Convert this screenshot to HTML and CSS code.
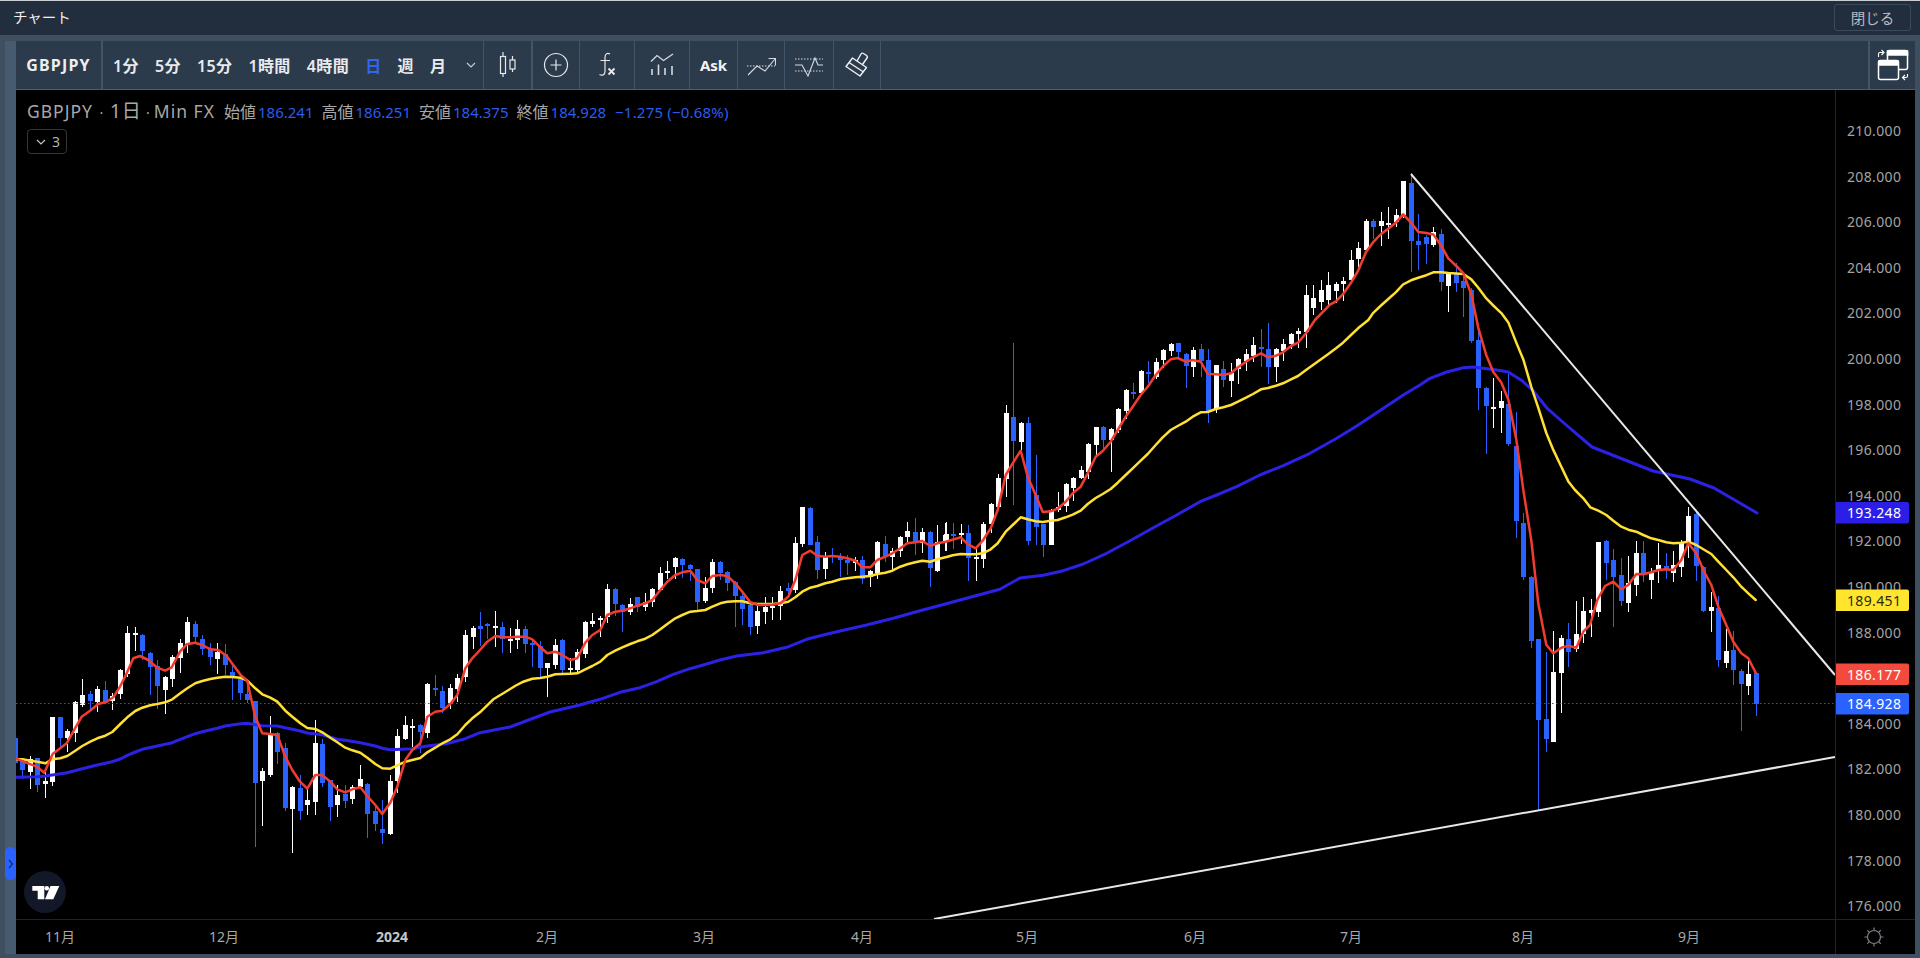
FILE: index.html
```html
<!DOCTYPE html>
<html lang="ja">
<head>
<meta charset="utf-8">
<title>チャート</title>
<link rel="stylesheet" href="styles.css">
</head>
<body>
<div class="window">
  <header class="titlebar">
    <span class="title">チャート</span>
    <button class="close">閉じる</button>
  </header>
  <div class="frame">
    <div class="side"></div>
    <div class="main">
      <div class="toolbar">
        <div class="tb symbol">GBPJPY</div>
        <div class="tb intervals">
          <span>1分</span><span>5分</span><span>15分</span><span>1時間</span><span>4時間</span><span class="active">日</span><span>週</span><span>月</span>
          <svg class="chev" viewBox="0 0 10 6" width="10" height="6"><path d="M1 1l4 4 4-4" fill="none" stroke="#c8ced6" stroke-width="1.1"/></svg>
        </div>
        <div class="tb w49 thick">
          <svg viewBox="0 0 28 28" width="28" height="28" fill="none" stroke="#e6e8ea" stroke-width="1.2"><path d="M9 1v25M18.500 5v16" /><rect x="6.500" y="5.500" width="5" height="17" fill="#2c3b4c"/><rect x="16" y="9" width="5" height="9" fill="#2c3b4c"/></svg>
        </div>
        <div class="tb w47">
          <svg viewBox="0 0 28 28" width="28" height="28" fill="none" stroke="#e6e8ea" stroke-width="1.2"><circle cx="14" cy="14" r="11.500"/><path d="M14 8.500v11M8.500 14h11"/></svg>
        </div>
        <div class="tb w55">
          <svg viewBox="0 0 28 28" width="28" height="28" fill="none" stroke="#e6e8ea" stroke-width="1.2"><path d="M17 3c-3-1.500-5 0-5 3.500v14c0 3.500-3 4.500-5.500 3M7.500 9.500H17"/><path d="M15.500 17.500l6 6m0-6l-6 6" stroke-width="1.800"/></svg>
        </div>
        <div class="tb w55">
          <svg viewBox="0 0 28 28" width="28" height="28" fill="none" stroke="#d6dade" stroke-width="1.300"><path d="M3 10.500l6-6 6.500 5L25 3"/><path d="M4 18v6M10.500 13.500V24M17 17v7M24 15v9" stroke-width="1.600"/></svg>
        </div>
        <div class="tb w48 ask">Ask</div>
        <div class="tb w47">
          <svg viewBox="0 0 30 28" width="30" height="28" fill="none" stroke="#d6dade" stroke-width="1.100"><path d="M2 24l9-9 8 5L29 8"/><path d="M22.500 7.500h7v7"/><path d="M1 15h28" stroke-dasharray="1.500 1.500"/></svg>
        </div>
        <div class="tb w49">
          <svg viewBox="0 0 30 28" width="30" height="28" fill="none" stroke="#d6dade" stroke-width="1.100"><path d="M1 14h7l6 11 7-18 3 7h5"/><path d="M1 8h28M1 20h28" stroke-dasharray="1.500 1.500"/></svg>
        </div>
        <div class="tb w47">
          <svg viewBox="0 0 28 28" width="28" height="28" fill="none" stroke="#f0f1f2" stroke-width="1.400" stroke-linejoin="round"><path d="M3 15.500L9.500 7l14 9.500-6.500 8.500z"/><path d="M14 10l4-7c.5-1 1.500-1.200 2.500-.5l3 2c1 .7 1.200 1.500.5 2.500l-4.500 6.500"/><path d="M6 11.500l14.500 9.500"/></svg>
        </div>
        <div class="spacer"></div>
        <div class="tb layout">
          <svg viewBox="0 0 34 34" width="34" height="34" fill="none" stroke="#fff" stroke-width="1.500"><rect x="11.500" y="2.500" width="20" height="19" rx="2"/><path d="M11.500 3h20v4h-20z" fill="#fff"/><rect x="2.500" y="12.500" width="20" height="19" rx="2" fill="#2c3b4c"/><path d="M3 13h19v4H3z" fill="#fff"/><path d="M2.500 9V6c0-1 .5-1.500 1.500-1.500h3M5.500 2l2.500 2.500L5.500 7M31.500 26v2c0 1-.5 1.500-1.500 1.500h-3.500M29 27l-2.500 2.500L29 32" stroke-width="1.100"/></svg>
        </div>
      </div>
      <div class="pane">
        <div class="legend">
          <div class="legend-row">
            <span class="sym">GBPJPY</span><span class="dot wide">·</span><span class="iv">1日</span><span class="dot narrow">·</span><span class="sym src">Min FX</span>
            <span class="ohlc">始値<b>186.241</b></span><span class="ohlc">高値<b>186.251</b></span><span class="ohlc">安値<b>184.375</b></span><span class="ohlc">終値<b>184.928</b></span><span class="chg">−1.275 (−0.68%)</span>
          </div>
          <button class="collapse"><svg viewBox="0 0 10 6" width="10" height="6"><path d="M1 1l4 4 4-4" fill="none" stroke="#c4c4c4" stroke-width="1.200"/></svg>3</button>
        </div>
        <svg class="chart" id="chart" viewBox="16 90 1899 864" width="1899" height="864">
          <g id="plot"></g>
          <path class="axis-line" d="M16 919.500H1915M1835.500 90V954"/>
          <g class="price">
            <text x="1847" y="136">210.000</text><text x="1847" y="181.600">208.000</text><text x="1847" y="227.200">206.000</text><text x="1847" y="272.800">204.000</text><text x="1847" y="318.400">202.000</text><text x="1847" y="364">200.000</text><text x="1847" y="409.600">198.000</text><text x="1847" y="455.200">196.000</text><text x="1847" y="500.800">194.000</text><text x="1847" y="546.400">192.000</text><text x="1847" y="592">190.000</text><text x="1847" y="637.600">188.000</text><text x="1847" y="728.800">184.000</text><text x="1847" y="774.400">182.000</text><text x="1847" y="820">180.000</text><text x="1847" y="865.600">178.000</text><text x="1847" y="911.200">176.000</text>
          </g>
          <g class="tags">
            <path class="t-blue" d="M1836 502h71a2 2 0 0 1 2 2v17.500a2 2 0 0 1-2 2h-71z"/><text x="1847" y="518">193.248</text>
            <path class="t-yellow" d="M1836 589.500h71a2 2 0 0 1 2 2v17.500a2 2 0 0 1-2 2h-71z"/><text class="dark" x="1847" y="605.500">189.451</text>
            <path class="t-red" d="M1836 663.500h71a2 2 0 0 1 2 2v17.500a2 2 0 0 1-2 2h-71z"/><text x="1847" y="679.500">186.177</text>
            <path class="t-main" d="M1836 693h71a2 2 0 0 1 2 2v17.500a2 2 0 0 1-2 2h-71z"/><text x="1847" y="709">184.928</text>
          </g>
          <g class="time">
            <text x="60" y="942">11月</text><text x="224" y="942">12月</text><text class="year" x="392" y="942">2024</text><text x="547" y="942">2月</text><text x="704" y="942">3月</text><text x="862" y="942">4月</text><text x="1027" y="942">5月</text><text x="1195" y="942">6月</text><text x="1351" y="942">7月</text><text x="1523" y="942">8月</text><text x="1689" y="942">9月</text>
          </g>
          <g class="sun" fill="none" stroke="#7d8187" stroke-width="1.200"><circle cx="1874" cy="937" r="6.500"/><path d="M1874 927.500v2.500M1874 944v2.500M1864.500 937h2.500M1881 937h2.500M1867.300 930.300l1.800 1.800M1879 942l1.800 1.800M1867.300 943.700l1.800-1.800M1879 932l1.800-1.800"/></g>
          <g class="logo">
            <circle class="logo-bg" cx="45" cy="892" r="21"/>
            <path class="logo-mark" d="M32.300 886h12v13.300h-6.600v-8.600h-5.400z"/>
            <circle class="logo-mark" cx="46.800" cy="888.300" r="2.300"/>
            <path class="logo-mark" d="M50.500 886h8.800l-6 13.300H45z"/>
          </g>
        </svg>
        <button class="tab" aria-label="open"><svg viewBox="0 0 6 10" width="6" height="10"><path d="M1 1l3.500 4L1 9" fill="none" stroke="#0b2a78" stroke-width="1.200"/></svg></button>
      </div>
    </div>
  </div>
</div>
<script src="chart.js"></script>
</body>
</html>
```

FILE: styles.css
```css
* { box-sizing: border-box; }
html, body { margin: 0; height: 100%; background: #3f4f60; overflow: hidden; }
body { font-family: "Noto Sans", "Noto Sans CJK JP", sans-serif; }
button { font-family: inherit; }

.window { display: flex; flex-direction: column; width: 1920px; height: 958px; }

.titlebar { display: flex; align-items: center; justify-content: space-between; height: 35px; padding: 0 9px 1px 13px; background: #222e3d; border-top: 1px solid #c9ced4; flex: none; }
.title { padding-bottom: 3px; color: #f0f0f0; font-size: 14.500px; }
.close { width: 77px; height: 27px; padding: 0; background: transparent; border: 1px solid #3b4a5b; border-radius: 3px; color: #b8bcc1; font-size: 14.500px; }

.frame { display: flex; flex: 1; min-height: 0; padding: 6px 5px 4px 5px; background: #3f4f60; }
.side { width: 11px; flex: none; background: #465a70; }
.main { display: flex; flex-direction: column; flex: 1; min-width: 0; }

.toolbar { display: flex; height: 49px; flex: none; background: #2c3b4c; border-bottom: 1px solid #4a5d72; color: #e8eaec; }
.tb { display: flex; align-items: center; justify-content: center; height: 48px; flex: none; border-right: 1px solid #41556b; }
.symbol { width: 87px; border-right-width: 2px; font-size: 16px; font-weight: 700; letter-spacing: 1.200px; color: #eceef0; }
.intervals { width: 381px; justify-content: flex-start; gap: 16px; padding-left: 10px; font-size: 16px; font-weight: 600; letter-spacing: .4px; }
.intervals .active { color: #2f66f0; }
.chev { margin-left: 4px; }
.thick { border-right-width: 2px; }
.w47 { width: 47px; }
.w48 { width: 48px; }
.w49 { width: 49px; }
.w55 { width: 55px; }
.ask { font-size: 15px; font-weight: 700; color: #f2f3f4; }
.spacer { flex: 1; }
.layout { width: 47px; border-right: 0; border-left: 2px solid #41556b; }

.pane { position: relative; flex: 1; min-height: 0; background: #000; }
.chart { display: block; }

.legend { position: absolute; left: 11px; top: 6px; display: flex; flex-direction: column; align-items: flex-start; gap: 9px; }
.legend-row { display: flex; align-items: baseline; height: 24px; color: #a8a8a8; font-size: 16px; white-space: nowrap; }
.sym { font-size: 17.500px; letter-spacing: 1px; }
.iv { font-size: 19px; letter-spacing: 1px; }
.dot { text-align: center; font-size: 14px; }
.dot.wide { width: 17px; }
.dot.narrow { width: 12px; }
.ohlc { margin-left: 8px; }
.ohlc b { margin-left: 2px; font-size: 15px; font-weight: 400; color: #2a5cf0; }
.chg { margin-left: 9px; font-size: 15px; color: #2a5cf0; letter-spacing: .2px; }
.src + .ohlc { margin-left: 9px; }

.collapse { display: flex; align-items: center; gap: 6px; width: 40px; height: 25px; padding: 0 0 0 8px; background: #000; border: 1px solid #33363a; border-radius: 4px; color: #b4b4b4; font-size: 14px; }

.tab { position: absolute; left: -11px; top: 757px; display: flex; align-items: center; justify-content: center; width: 11px; height: 33px; padding: 0; border: 0; border-radius: 5px; background: #2962ff; }

.axis-line { fill: none; stroke: #222326; stroke-width: 1; }
.price text, .time text, .tags text { font-family: "Noto Sans", "Noto Sans CJK JP", sans-serif; font-size: 14px; }
.price text { fill: #a3a3a3; letter-spacing: .35px; }
.time text { fill: #a8a8a8; text-anchor: middle; }
.time .year { fill: #c6c6c6; font-weight: 700; }
.tags text { fill: #fff; letter-spacing: .35px; }
.tags .dark { fill: #2a2a10; }
.t-blue { fill: #2b1ee6; }
.t-yellow { fill: #ffe52e; }
.t-red { fill: #f44a3e; }
.t-main { fill: #2962ff; }
.logo-bg { fill: #131829; }
.logo-mark { fill: #fff; }

.c-up { fill: #fff; }
.c-dn { fill: #2962ff; }
.ma { fill: none; stroke-width: 2.500; stroke-linejoin: round; stroke-linecap: round; }
.ma-red { stroke: #f23c30; }
.ma-yellow { stroke: #ffe033; }
.ma-blue { stroke: #2b22e6; stroke-width: 3; }
.trend { fill: none; stroke: #e8e8e8; stroke-width: 2; }
.last { fill: none; stroke: #2a55d8; stroke-width: 1; stroke-dasharray: 1.500 2.500; }
```

FILE: chart.js
```js
// Chart data read off the reference: each segment has its own [xoff, yoff, yscale] and
// candles are [x, up, high, top, bottom, low].
var NS = 'http://www.w3.org/2000/svg';
var plot = document.getElementById('plot');

var candleSegs = [
 [0,580,3,[[45,0,474,474,548,548],[67,0,535,543,570,596],[91,1,528,537,575,627],[112,0,534,534,614,636],[136,1,575,602,612,654],[157,1,410,410,605,618],[181,0,411,411,473,505],[202,1,448,452,473,516],[226,1,362,365,458,486],[247,1,296,345,375,380],[271,0,332,342,362,388],[292,1,318,327,365,396],[316,0,303,330,365,372],[337,1,340,348,362,390],[361,1,268,269,341,356],[382,1,137,158,282,290],[406,1,140,158,163,212],[427,0,162,165,214,240],[451,0,216,219,260,345],[472,0,240,258,319,388],[496,1,288,290,329,401],[517,1,224,231,296,320],[541,1,176,188,235,278],[562,1,112,125,192,220],[586,0,122,132,172,188],[607,0,165,178,207,225],[631,0,188,208,232,255],[652,1,188,216,238,282],[676,0,192,222,256,285],[697,0,258,277,295,360],[721,0,282,298,338,360],[742,0,298,342,359,370],[766,0,363,363,608,800],[787,1,563,573,602,738],[811,1,407,461,585,590],[832,0,457,459,515,552],[856,0,489,504,683,692],[877,1,618,621,686,818],[901,0,586,624,692,720],[922,1,625,660,674,705],[946,1,420,489,665,705],[967,0,478,492,608,620],[991,0,600,601,680,722],[1012,1,615,645,674,711],[1036,0,616,641,662,684],[1057,1,615,622,656,672],[1081,1,555,597,621,628],[1102,0,610,612,701,773],[1126,0,672,694,731,752],[1147,0,660,748,758,792],[1171,1,585,603,762,765],[1192,1,447,468,602,638],[1216,1,407,435,476,480],[1237,1,417,437,440,500],[1261,0,432,435,456,518],[1282,1,308,312,458,473],[1306,0,285,324,328,347],[1327,0,318,333,385,400],[1351,1,312,324,372,386],[1372,1,282,293,326,365],[1396,1,150,165,292,305]]],
 [470,440,3,[[9,1,558,563,592,627],[31,0,516,558,568,618],[52,0,548,551,559,596],[76,1,512,557,563,622],[97,0,546,561,596,640],[121,1,563,596,600,638],[142,1,539,566,601,626],[166,0,558,567,613,640],[187,0,600,608,612,680],[211,0,602,617,683,716],[232,1,668,669,685,770],[256,1,596,615,674,688],[277,0,597,599,689,705],[301,1,655,685,690,700],[322,1,626,636,690,700],[346,1,543,545,641,655],[367,1,518,543,551,562],[391,1,528,533,538,590],[412,1,433,447,532,550],[436,0,445,447,493,527],[457,0,492,495,515,575],[481,1,473,491,515,524],[502,0,470,470,502,517],[526,1,458,485,501,512],[547,1,444,446,487,500],[571,1,382,398,450,452],[592,1,362,392,400,417],[616,1,350,355,382,418],[637,0,354,356,376,415],[661,0,372,374,386,424],[682,0,386,387,487,510],[706,1,412,443,482,490],[727,1,358,367,445,458],[751,0,363,365,398,420],[772,0,393,396,428,452],[796,0,422,425,467,562],[817,0,462,467,506,555],[841,0,482,496,560,585],[862,1,490,512,557,581],[886,1,472,500,517,552],[907,1,472,497,503,540],[931,1,438,452,497,540],[955,0,430,445,452,462],[976,1,292,308,449,460],[997,1,200,202,312,320],[1021,0,202,205,314,316],[1042,0,288,306,390,416],[1066,1,335,348,386,418],[1087,0,325,345,350,370],[1111,0,340,348,361,410],[1132,0,345,360,370,405],[1156,1,352,360,368,392],[1177,0,348,360,416,432],[1201,1,390,392,412,440],[1222,1,304,305,400,418],[1246,0,288,311,352,365],[1267,1,325,333,352,395],[1291,1,288,291,333,350],[1312,1,245,272,292,310],[1336,0,234,275,305,345],[1357,1,264,276,310,340],[1381,0,273,275,385,442],[1402,1,254,306,394,395],[1426,1,248,284,303,332]]],
 [940,320,3,[[17,1,607,643,662,692],[38,0,608,642,647,688],[62,1,611,640,645,672],[83,0,615,638,714,782],[107,1,678,711,717,782],[128,1,605,611,718,745],[152,1,548,551,611,638],[173,1,463,473,562,530],[197,1,256,278,477,530],[218,0,70,292,363,556],[242,1,305,308,365,390],[263,0,292,310,664,674],[287,0,406,524,622,676],[308,0,611,613,676,710],[332,1,568,570,676,676],[353,1,517,560,571,575],[377,1,488,493,558,575],[398,1,470,475,505,542],[422,1,437,451,475,478],[443,1,370,373,457,478],[467,1,320,322,376,408],[488,0,318,322,360,392],[512,1,323,326,361,456],[533,1,265,268,331,340],[557,1,208,210,274,298],[578,0,190,216,219,236],[602,1,150,153,220,225],[623,0,124,157,161,188],[647,1,115,127,170,178],[668,1,88,91,120,145],[692,1,70,72,94,108],[713,0,68,70,96,115],[737,0,98,103,138,205],[758,1,80,91,142,172],[782,0,72,88,123,172],[803,0,88,121,272,310],[827,1,134,136,266,278],[850,0,122,146,180,200],[873,1,128,158,183,230],[894,1,115,117,148,193],[918,1,88,103,123,152],[939,1,52,76,108,125],[963,0,28,80,86,142],[984,0,8,88,141,193],[1008,1,85,88,141,185],[1029,1,58,73,94,122],[1053,1,38,43,73,88],[1074,1,25,34,41,85],[1098,1,-75,-75,37,85]]],
 [0,0,1,[[1313.400,1,285,298,308,315],[1321,1,280,290,302,310],[1328.400,1,272,285,300,306]]],
 [1330,170,2.376,[[18,1,265,272,288,316],[39,1,254,264,272,312],[63,1,190,215,262,265],[84,1,172,186,212,240],[108,1,116,120,190,196],[129,0,116,120,135,165],[153,1,100,120,134,180],[174,1,88,125,127,165],[198,1,93,108,124,135],[219,1,25,27,108,115],[243,0,8,31,168,242],[265,0,105,169,178,238],[289,0,155,160,176,223],[310,1,135,148,178,184],[334,0,140,152,265,288],[355,1,243,247,276,337],[379,0,220,246,268,290],[400,0,248,264,280,350],[424,0,280,286,406,410],[445,0,385,403,518,570],[469,0,515,519,561,675],[490,1,495,562,566,613],[514,1,524,550,566,626],[535,0,480,555,652,656],[559,0,575,655,835,875],[580,0,815,838,968,975],[604,0,965,968,1118,1135],[625,0,1114,1114,1306,1522],[649,0,1145,1304,1351,1382],[670,1,1095,1192,1358,1360],[694,1,1104,1112,1194,1290],[715,0,1076,1114,1146,1182],[739,1,1025,1102,1139,1146]]],
 [1520,490,3,[[190,1,322,362,431,458],[214,1,328,359,368,440],[235,1,155,157,367,380],[259,0,149,152,220,270],[280,0,178,209,260,412],[304,0,203,255,334,347],[325,1,198,279,338,365],[349,1,154,188,284,317],[370,0,152,188,248,275],[394,1,235,250,269,326],[415,1,158,224,242,278],[439,0,190,227,240,268],[460,1,183,224,248,275],[484,1,150,155,230,260],[505,1,52,77,160,203],[529,0,62,73,229,272],[550,0,228,231,362,365],[574,1,305,352,362,425],[595,0,318,353,509,530],[619,1,418,482,518,534],[640,0,422,480,539,585],[664,0,538,543,581,722],[685,1,514,552,587,614],[709,0,549,549,641,678]]]
];

var red = [
 [0,580,3,[[48,536],[110,560],[133,578],[158,522],[200,490],[225,445],[245,410],[270,392],[295,372],[320,365],[340,352],[360,320],[380,280],[400,235],[420,228],[445,240],[470,262],[495,272],[515,262],[540,215],[560,193],[585,188],[607,195],[632,208],[655,210],[680,228],[700,255],[722,285],[742,302],[752,350],[766,410],[787,460],[811,462],[832,465],[856,530],[877,570],[900,605],[922,626],[946,585],[967,585],[991,605],[1012,628],[1036,637],[1057,628],[1081,622],[1102,648],[1126,675],[1147,702],[1171,668],[1192,620],[1216,540],[1237,510],[1261,490],[1282,410],[1306,395],[1327,392],[1351,372],[1372,345],[1396,265],[1417,235]]],
 [470,440,3,[[30,630],[52,605],[76,588],[97,592],[121,592],[142,590],[166,590],[187,598],[211,622],[232,640],[256,635],[277,645],[301,660],[322,655],[346,608],[367,585],[391,570],[412,525],[436,515],[457,512],[481,505],[502,497],[526,490],[547,480],[571,450],[592,425],[616,405],[637,397],[661,392],[682,420],[706,430],[727,408],[751,405],[772,408],[796,430],[817,455],[841,487],[862,494],[886,495],[907,494],[931,490],[955,470],[976,420],[997,345],[1021,332],[1042,347],[1066,350],[1087,348],[1111,350],[1132,355],[1156,362],[1177,382],[1201,382],[1222,360],[1246,350],[1267,340],[1291,325],[1312,310],[1336,307],[1357,303],[1381,318],[1402,310]]],
 [940,320,3,[[17,665],[62,652],[83,672],[107,685],[128,662],[152,625],[173,570],[197,465],[218,430],[242,392],[263,470],[287,525],[308,576],[332,574],[353,566],[377,545],[398,520],[422,500],[443,460],[467,410],[488,393],[512,365],[533,330],[557,290],[578,260],[602,225],[623,200],[647,165],[668,140],[692,118],[713,114],[737,125],[758,120],[782,125],[803,162],[827,163],[850,165],[873,160],[894,142],[918,125],[939,112],[963,100],[984,112],[1008,107],[1029,97],[1053,78],[1074,68],[1098,40],[1125,0]]],
 [1330,170,2.376,[[0,320],[18,312],[39,295],[63,268],[84,240],[108,195],[129,172],[153,152],[174,140],[198,125],[219,105],[243,125],[265,147],[289,150],[310,153],[334,180],[355,210],[379,228],[400,245],[424,295],[445,375],[469,440],[490,480],[514,505],[535,545],[559,640],[580,760],[604,880],[625,1030],[649,1128],[670,1148],[694,1135],[715,1130],[739,1135]]],
 [1520,490,3,[[190,425],[210,405],[232,330],[255,288],[280,275],[304,298],[325,285],[349,252],[370,253],[394,247],[415,240],[439,238],[460,240],[484,210],[505,160],[529,190],[550,240],[574,285],[595,350],[619,405],[640,455],[664,490],[685,505],[707,548]]]
];

var yellow = [
 [0,580,3,[[48,538],[67,538],[91,542],[112,545],[136,550],[157,538],[181,535],[202,528],[226,512],[247,498],[271,485],[292,475],[316,467],[337,456],[361,432],[382,412],[406,393],[427,383],[451,376],[472,372],[496,367],[517,358],[541,340],[562,325],[586,310],[607,303],[631,297],[652,293],[676,290],[697,291],[721,293],[742,302],[766,325],[787,343],[811,353],[832,365],[856,392],[877,410],[901,430],[922,444],[946,447],[967,457],[991,473],[1012,487],[1036,503],[1057,511],[1081,518],[1102,533],[1126,552],[1147,565],[1171,566],[1192,556],[1216,545],[1237,540],[1261,534],[1282,517],[1306,503],[1327,490],[1351,478],[1372,463],[1396,435],[1417,415],[1440,397]]],
 [470,440,3,[[70,778],[100,760],[135,738],[160,725],[187,716],[211,714],[232,710],[256,703],[277,702],[301,701],[322,700],[346,688],[367,678],[391,665],[412,645],[436,632],[457,622],[481,612],[502,604],[526,596],[547,585],[571,568],[592,552],[616,535],[637,525],[661,515],[682,513],[706,510],[727,500],[751,490],[772,485],[796,484],[817,484],[841,490],[862,492],[886,492],[907,492],[931,490],[955,485],[976,472],[997,455],[1021,443],[1042,438],[1066,430],[1087,425],[1111,418],[1132,415],[1156,412],[1177,410],[1201,408],[1222,402],[1246,398],[1267,392],[1291,380],[1312,373],[1336,367],[1357,362],[1381,365],[1402,358],[1426,352]]],
 [940,320,3,[[17,712],[38,706],[62,702],[83,703],[107,703],[128,700],[152,688],[173,670],[197,635],[218,615],[242,592],[263,598],[287,604],[308,606],[332,602],[353,600],[377,592],[398,584],[422,572],[443,552],[467,534],[488,522],[512,507],[533,488],[557,465],[578,445],[602,422],[623,402],[647,375],[668,352],[692,330],[713,318],[737,305],[758,290],[782,277],[803,276],[827,267],[850,262],[873,255],[894,245],[918,233],[939,222],[963,208],[984,204],[1008,197],[1029,190],[1053,178],[1074,168],[1098,150],[1119,135],[1143,118],[1164,103],[1188,85],[1209,68],[1233,45],[1254,25],[1285,0]]],
 [1330,170,2.376,[[129,340],[153,322],[174,307],[198,290],[219,272],[243,262],[265,256],[289,250],[310,243],[334,243],[355,245],[379,246],[400,247],[424,260],[445,280],[469,305],[490,322],[514,340],[535,362],[559,410],[580,450],[604,515],[625,565],[649,625],[670,665],[694,705],[715,740]]],
 [1520,490,3,[[165,0],[190,25],[211,52],[235,62],[259,75],[280,92],[304,110],[325,119],[349,125],[370,135],[394,145],[415,150],[439,157],[460,160],[484,158],[505,155],[529,165],[550,178],[574,192],[595,215],[619,240],[640,262],[664,290],[685,310],[707,330]]]
];

var blue = [
 [0,580,3,[[48,592],[112,590],[136,588],[157,585],[202,578],[247,566],[292,555],[337,545],[361,537],[382,526],[406,516],[427,508],[472,498],[517,488],[541,478],[562,470],[586,461],[607,455],[652,445],[676,438],[721,431],[742,430],[766,434],[787,437],[832,438],[856,443],[901,453],[922,459],[967,464],[1012,478],[1036,481],[1081,488],[1126,498],[1147,505],[1171,509],[1237,506],[1282,498],[1327,493],[1351,488],[1396,476],[1440,458]]],
 [0,0,1,[[510,727],[550,712],[580,705]]],
 [470,440,3,[[390,778],[450,757],[510,743],[560,725],[610,703],[660,686],[700,675],[750,660],[800,648],[880,638],[950,622],[1010,598],[1060,585],[1110,573],[1190,555],[1270,535],[1350,512],[1426,492]]],
 [940,320,3,[[180,808],[240,774],[310,766],[370,752],[430,732],[500,700],[570,662],[640,623],[710,585],[780,545],[830,525],[890,500],[960,465],[1030,437],[1110,400],[1190,355],[1250,318],[1310,278],[1390,225],[1440,195]]],
 [1330,170,2.376,[[300,495],[350,480],[400,470],[430,468],[500,475],[535,480],[575,500],[610,525],[650,565],[700,600]]],
 [0,0,1,[[1592,447],[1653,471],[1690,479],[1714,488],[1757,513]]]
];

function el(name, attrs) {
  var n = document.createElementNS(NS, name);
  for (var k in attrs) n.setAttribute(k, attrs[k]);
  plot.appendChild(n);
  return n;
}

function points(segs) {
  var out = [];
  segs.forEach(function (s) {
    var xs = s[2] === 1 ? 1 : 3;
    s[3].forEach(function (p) {
      out.push((s[0] + p[0] / xs).toFixed(1) + ' ' + (s[1] + p[1] / s[2]).toFixed(1));
    });
  });
  return 'M' + out.join('L');
}

var paths = { 1: '', 0: '' };
candleSegs.forEach(function (s) {
  var xs = s[2] === 1 ? 1 : 3;
  var f = function (v) { return Math.round(s[1] + v / s[2]); };
  s[3].forEach(function (c) {
    var x = Math.round(s[0] + c[0] / xs);
    var hi = f(c[2]), top = f(c[3]), bot = f(c[4]), lo = f(c[5]);
    if (bot - top < 2) bot = top + 2;
    paths[c[1]] += 'M' + x + ' ' + hi + 'h1V' + lo + 'h-1z';
    paths[c[1]] += 'M' + (x - 2) + ' ' + top + 'h5V' + bot + 'h-5z';
  });
});
// hidden candle between the two zoomed regions
paths[1] += 'M1306 285h1V345h-1zM1304 295h5V320h-5z';
el('path', { 'class': 'c-dn', 'shape-rendering': 'crispEdges', d: paths[0] });
el('path', { 'class': 'c-up', 'shape-rendering': 'crispEdges', d: paths[1] });

el('path', { 'class': 'last', d: 'M16 703.500H1835' });
el('path', { 'class': 'ma ma-blue', d: points(blue) });
el('path', { 'class': 'ma ma-yellow', d: points(yellow) });
el('path', { 'class': 'ma ma-red', d: points(red) });
el('path', { 'class': 'trend', d: 'M1411 174L1835 675' });
el('path', { 'class': 'trend', d: 'M934 919L1835 757' });
```
